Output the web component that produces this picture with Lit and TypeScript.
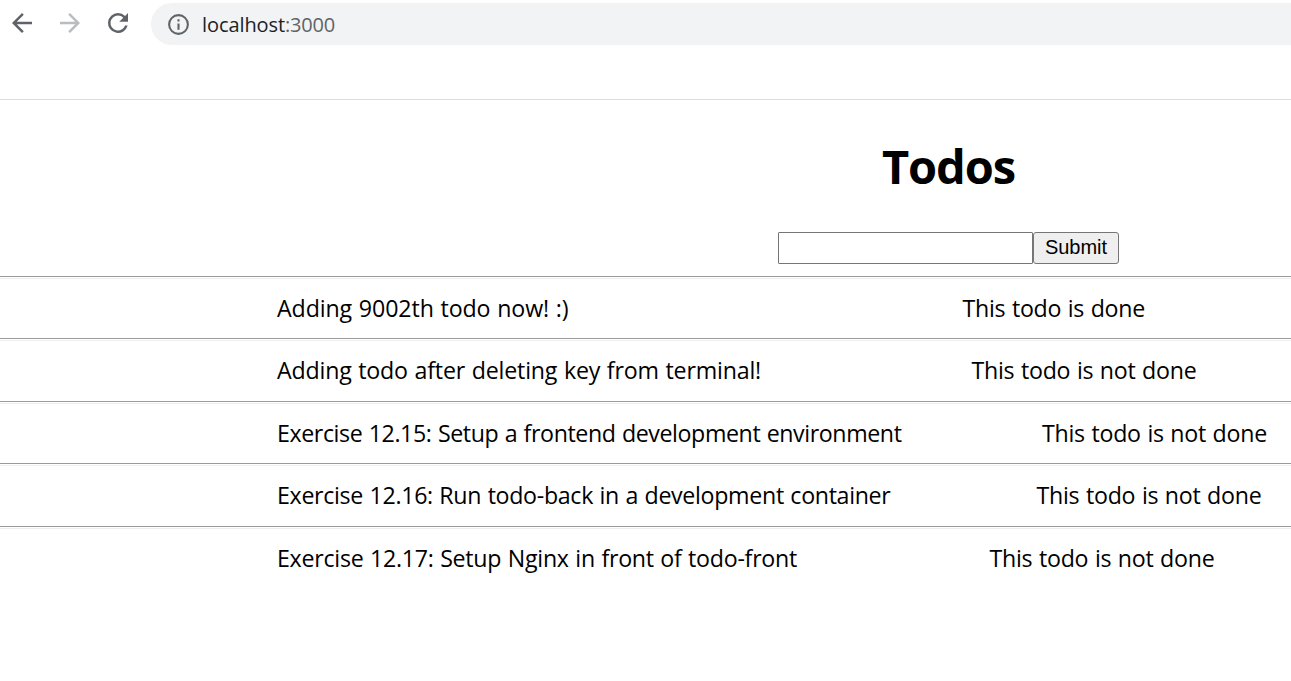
import { LitElement, html, css } from "lit";
import { customElement, property } from "lit/decorators.js";

/** Text run whose tracking is tuned so that it fills a known width. */
@customElement("fit-text")
class FitText extends LitElement {
  @property() text = "";
  @property({ type: Number }) width = 0;

  static styles = css`
    :host { display: inline-block; white-space: pre; }
  `;

  async updated() {
    await document.fonts.ready;
    this.style.letterSpacing = "0px";
    const natural = this.getBoundingClientRect().width;
    this.style.letterSpacing = `${(this.width - natural) / this.text.length}px`;
  }

  render() {
    return html`${this.text}`;
  }
}

interface Todo {
  text: string;
  width: number;
  gap: number;
  done: boolean;
}

const todos: Todo[] = [
  { text: "Adding 9002th todo now! :)", width: 291.5, gap: 394, done: true },
  { text: "Adding todo after deleting key from terminal!", width: 484, gap: 210.5, done: false },
  { text: "Exercise 12.15: Setup a frontend development environment", width: 624.5, gap: 140.5, done: false },
  { text: "Exercise 12.16: Run todo-back in a development container", width: 613.5, gap: 146, done: false },
  { text: "Exercise 12.17: Setup Nginx in front of todo-front", width: 520, gap: 192.5, done: false },
];

@customElement("app-root")
class AppRoot extends LitElement {
  static styles = css`
    :host {
      display: block;
      width: 100%;
      height: 681px;
      overflow: hidden;
      background: #fff;
      color: #000;
      font-family: "Open Sans", "Noto Sans", sans-serif;
    }
    .toolbar {
      box-sizing: border-box;
      height: 100px;
      padding-top: 3px;
      border-bottom: 1px solid #dadce0;
      display: flex;
      align-items: flex-start;
    }
    .nav {
      display: flex;
      gap: 18px;
      padding: 5px 18px 0 7px;
      color: #5f6368;
    }
    .nav svg { display: block; width: 30px; height: 30px; }
    .off { color: #babcbe; }
    .address {
      box-sizing: border-box;
      flex: 1;
      height: 42px;
      padding-left: 15px;
      border-radius: 21px 0 0 21px;
      background: #f1f3f4;
      display: flex;
      align-items: center;
      font-size: 20px;
      color: #202124;
    }
    .address svg { width: 25px; height: 25px; margin-right: 11px; color: #5f6368; }
    .port { color: #5f6368; }
    .page { display: flex; flex-direction: column; }
    .head {
      width: 605px;
      margin-left: 646px;
      display: flex;
      flex-direction: column;
      align-items: center;
    }
    h1 {
      margin: 33px 0 0;
      font-size: 47px;
      line-height: 66px;
      font-weight: 700;
    }
    form { display: flex; margin: 33px 0 11.75px; }
    input {
      box-sizing: border-box;
      width: 255px;
      height: 32px;
      margin: 0;
      border: 1px solid #767676;
      border-radius: 1px;
      background: #fff;
      outline: none;
    }
    button {
      box-sizing: border-box;
      width: 86px;
      height: 32px;
      padding: 0 0 2px;
      border: 1px solid #767676;
      border-radius: 3px;
      background: #efefef;
      color: #000;
      font: 20px "Liberation Sans", Arial, sans-serif;
    }
    .row {
      box-sizing: border-box;
      height: 62.5px;
      padding: 2px 0 0 277px;
      display: flex;
      font-size: 23.2px;
      line-height: 60px;
      word-spacing: 0.8px;
      white-space: nowrap;
      background: linear-gradient(#9a9a9a 0 1px, #fff 1px 2px, #eee 2px 3px, #fff 3px);
    }
  `;

  render() {
    return html`
      <div class="toolbar">
        <div class="nav">
          <svg viewBox="0 0 24 24" fill="currentColor"><path d="M20 11H7.83l5.59-5.59L12 4l-8 8 8 8 1.41-1.41L7.83 13H20z"/></svg>
          <svg class="off" viewBox="0 0 24 24" fill="currentColor"><path d="M12 4l-1.41 1.41L16.17 11H4v2h12.17l-5.58 5.59L12 20l8-8z"/></svg>
          <svg viewBox="0 0 24 24" fill="currentColor"><path d="M17.65 6.35A7.96 7.96 0 0 0 12 4a8 8 0 1 0 7.73 10h-2.08A6 6 0 1 1 12 6c1.66 0 3.14.69 4.22 1.78L13 11h7V4z"/></svg>
        </div>
        <div class="address">
          <svg viewBox="0 0 24 24" fill="currentColor"><path d="M11 7h2v2h-2zm0 4h2v6h-2zm1-9a10 10 0 1 0 0 20 10 10 0 0 0 0-20zm0 18a8 8 0 1 1 0-16 8 8 0 0 1 0 16z"/></svg>
          <fit-text text="localhost" width="83"></fit-text><fit-text class="port" text=":3000" width="50"></fit-text>
        </div>
      </div>
      <div class="page">
        <div class="head">
          <h1><fit-text text="Todos" width="133"></fit-text></h1>
          <form @submit=${(e: Event) => e.preventDefault()}>
            <input type="text" aria-label="New todo" /><button type="submit">Submit</button>
          </form>
        </div>
        ${todos.map((t) => html`
          <div class="row">
            <fit-text .text=${t.text} .width=${t.width}></fit-text>
            <fit-text
              style="margin-left:${t.gap}px"
              .text=${t.done ? "This todo is done" : "This todo is not done"}
              .width=${t.done ? 182.5 : 225}
            ></fit-text>
          </div>`)}
      </div>
    `;
  }
}
